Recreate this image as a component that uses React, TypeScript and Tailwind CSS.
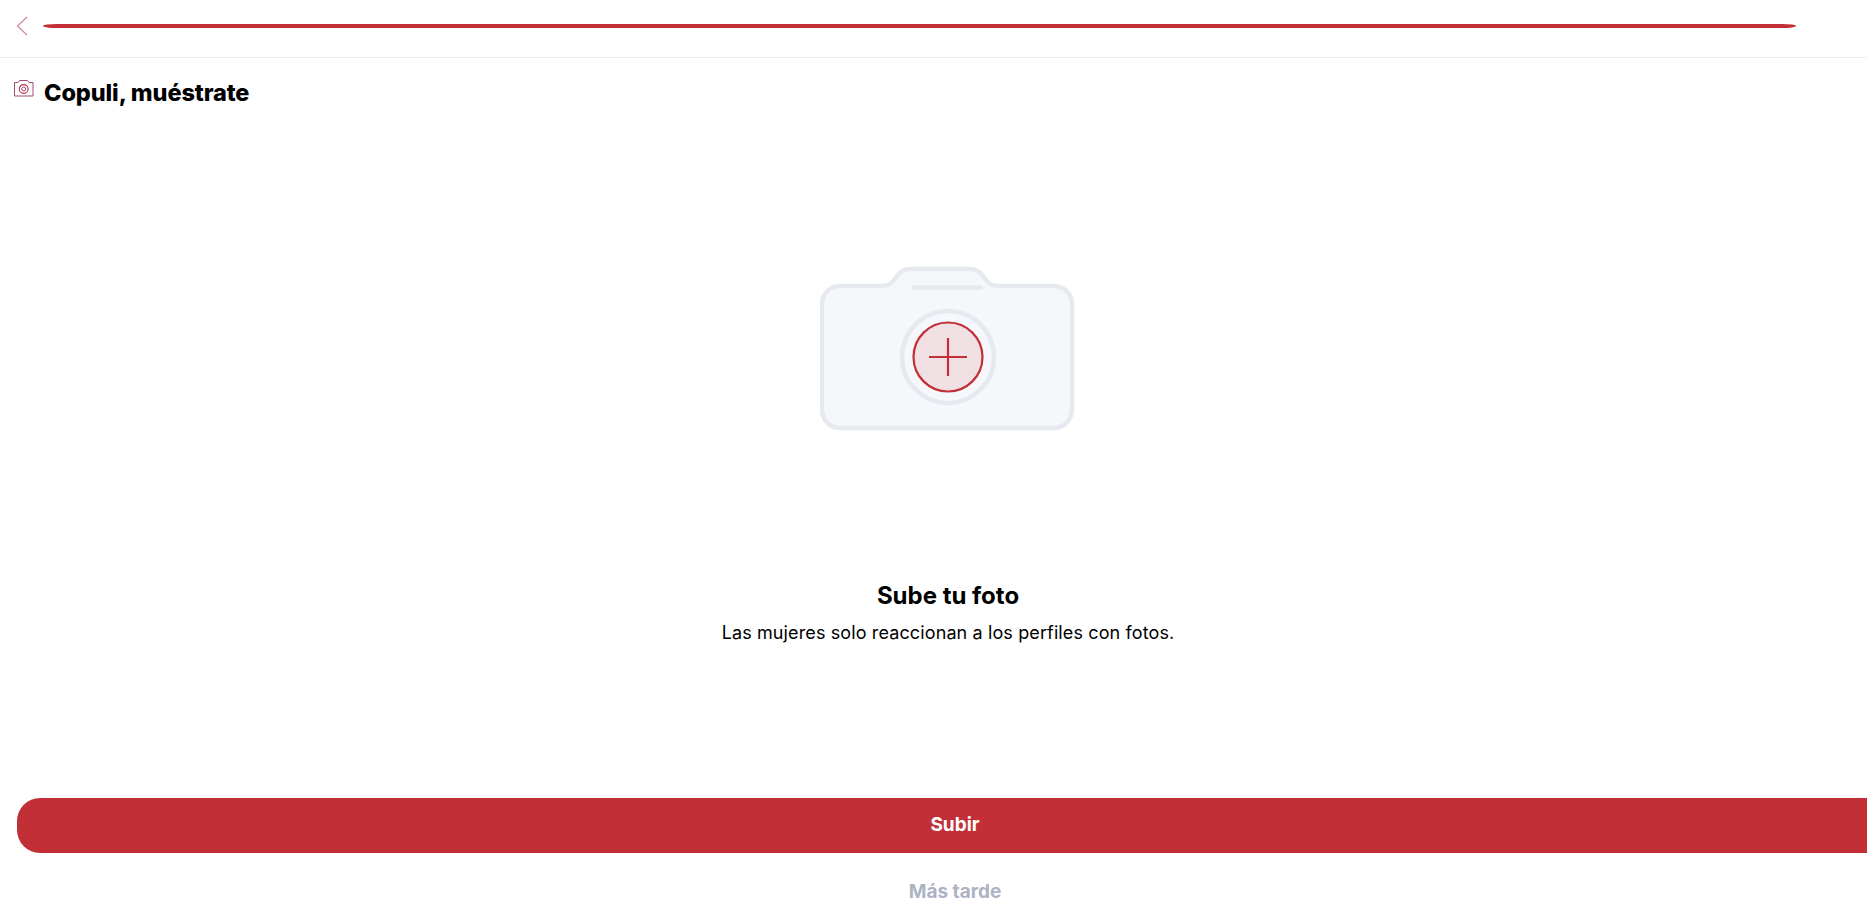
export default function App() {
  return (
    <div className="relative h-[914px] w-[1867px] overflow-hidden bg-white font-['Inter',sans-serif] text-black">
      <header className="flex h-[58px] items-center border-b border-[#ececec] pb-[6px]">
        <button className="ml-[16px] flex h-[20px] w-[12px] items-center justify-center">
          <svg width="12" height="20" viewBox="0 0 12 20" fill="none">
            <path d="M11 1 L1.5 10 L11 19" stroke="#cf8a97" strokeWidth="1.2" />
          </svg>
        </button>
        <div className="ml-[15px] h-[4px] w-[1753px] rounded-[14px/2px] bg-[#c22f36]" />
      </header>

      <div className="ml-[13px] mt-[21px] flex items-center">
        <svg width="21" height="18" viewBox="0 0 21 18" fill="none" className="-mt-[11px]">
          <path d="M1.5 3.5 H5 L6.5 1.5 H14.5 L16 3.5 H20 V17 H1.5 Z" stroke="#9c4a78" strokeWidth="1" />
          <circle cx="10.7" cy="10" r="4.4" stroke="#b8323f" strokeWidth="1.1" />
          <circle cx="10.7" cy="10" r="2" stroke="#9c4a78" strokeWidth="1" />
        </svg>
        <h1 className="ml-[10px] text-[23.5px] font-extrabold leading-[28px] tracking-[-0.1px]">Copuli, muéstrate</h1>
      </div>

      <main className="mt-[159px] flex w-[1896px] flex-col items-center">
        <svg width="256" height="165" viewBox="0 0 256 165" fill="none">
          <path
            d="M20 20 H62 C68 20 71 18 74 14 L78 9 C81 5 85 3 90 3 H150 C155 3 159 5 162 9 L166 14 C169 18 172 20 178 20 H234 C244 20 252 28 252 38 V143 C252 154 244 162 234 162 H20 C10 162 2 154 2 143 V38 C2 28 10 20 20 20 Z"
            fill="#f5f7fb"
            stroke="#e6e9f0"
            strokeWidth="4.5"
          />
          <path d="M94 21.5 H161" stroke="#e6e9f0" strokeWidth="4.5" strokeLinecap="round" />
          <circle cx="128" cy="91" r="46" fill="#f5f7fb" stroke="#e6e9f0" strokeWidth="4.5" />
          <circle cx="128" cy="91" r="34.5" fill="#f1e0e3" stroke="#c22f36" strokeWidth="2.2" />
          <path d="M128 72 V110 M109 91 H147" stroke="#c22f36" strokeWidth="2.2" />
        </svg>
        <h2 className="mt-[150px] text-[24px] font-bold leading-[30px]">Sube tu foto</h2>
        <p className="mt-[9px] text-[18px] font-normal leading-[26px] tracking-[0.12px]">Las mujeres solo reaccionan a los perfiles con fotos.</p>
      </main>

      <div className="mt-[152px] ml-[17px] flex w-[1876px] flex-col items-center">
        <button className="flex h-[55px] w-full items-center justify-center rounded-[23px] bg-[#c22f36] text-[19px] font-bold text-white">
          Subir
        </button>
        <button className="mt-[28px] text-[19px] font-bold leading-[22px] text-[#adb3c2]">Más tarde</button>
      </div>
    </div>
  );
}
